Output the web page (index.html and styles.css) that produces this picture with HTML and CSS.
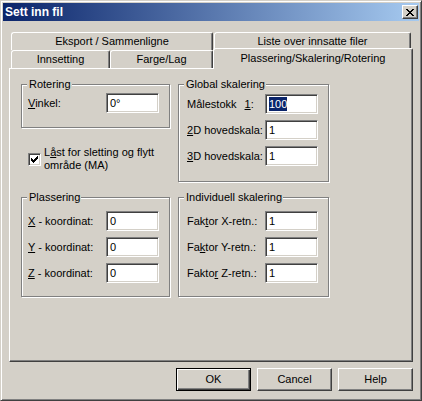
FILE: index.html
```html
<!DOCTYPE html>
<html>
<head>
<meta charset="utf-8">
<link rel="stylesheet" href="styles.css">
</head>
<body>
<div class="window">
  <div class="titlebar">
    <span class="title">Sett inn fil</span>
    <div class="close">
      <svg width="8" height="7" viewBox="0 0 8 7" shape-rendering="crispEdges"><path fill="#000" d="M0 0h2v1H0zM6 0h2v1H6zM1 1h2v1H1zM5 1h2v1H5zM2 2h4v1H2zM3 3h2v1H3zM2 4h4v1H2zM1 5h2v1H1zM5 5h2v1H5zM0 6h2v1H0zM6 6h2v1H6z"/></svg>
    </div>
  </div>
  <div class="content">
    <div class="tabs">
      <div class="tabrow">
        <div class="tab t-eksport">Eksport / Sammenligne</div>
        <div class="tab t-liste">Liste over innsatte filer</div>
      </div>
      <div class="tabrow row2">
        <div class="tab t-inns">Innsetting</div>
        <div class="tab t-farge">Farge/Lag</div>
        <div class="tab t-active">Plassering/Skalering/Rotering</div>
      </div>
    </div>
    <div class="panel">
      <div class="grid">
        <div class="cell">
          <div class="group g-left g-rot">
            <div class="gtitle">Rotering</div>
            <div class="fields">
              <div class="field"><span class="label"><u>V</u>inkel:</span><div class="input">0°</div></div>
            </div>
          </div>
          <div class="check">
            <div class="checkbox">
              <svg width="7" height="7" viewBox="0 0 7 7" shape-rendering="crispEdges"><path fill="#000" d="M6 0h1v1H6zM5 1h2v1H5zM0 2h1v1H0zM4 2h3v1H4zM0 3h2v1H0zM3 3h3v1H3zM0 4h5v1H0zM1 5h3v1H1zM2 6h1v1H2z"/></svg>
            </div>
            <div class="checklabel">L<u>å</u>st for sletting og flytt<br>område (MA)</div>
          </div>
        </div>
        <div class="group g-right g-global">
          <div class="gtitle">Global skalering</div>
          <div class="fields">
            <div class="field"><span class="label">Målestokk<span class="one"><u>1</u>:</span></span><div class="input"><span class="sel">100</span></div></div>
            <div class="field"><span class="label"><u>2</u>D hovedskala:</span><div class="input">1</div></div>
            <div class="field"><span class="label"><u>3</u>D hovedskala:</span><div class="input">1</div></div>
          </div>
        </div>
        <div class="group g-left g-box">
          <div class="gtitle">Plassering</div>
          <div class="fields">
            <div class="field"><span class="label"><u>X</u> - koordinat:</span><div class="input">0</div></div>
            <div class="field"><span class="label"><u>Y</u> - koordinat:</span><div class="input">0</div></div>
            <div class="field"><span class="label"><u>Z</u> - koordinat:</span><div class="input">0</div></div>
          </div>
        </div>
        <div class="group g-right g-box">
          <div class="gtitle">Individuell skalering</div>
          <div class="fields">
            <div class="field"><span class="label">Fak<u>t</u>or X-retn.:</span><div class="input">1</div></div>
            <div class="field"><span class="label">Fa<u>k</u>tor Y-retn.:</span><div class="input">1</div></div>
            <div class="field"><span class="label">Fakto<u>r</u> Z-retn.:</span><div class="input">1</div></div>
          </div>
        </div>
      </div>
    </div>
    <div class="buttons">
      <div class="btn default">OK</div>
      <div class="btn">Cancel</div>
      <div class="btn">Help</div>
    </div>
  </div>
</div>
</body>
</html>
```

FILE: styles.css
```css
html, body {
  margin: 0;
  padding: 0;
  background: #d4d0c8;
}
body {
  font-family: "Liberation Sans", Arial, sans-serif;
  font-size: 11px;
  color: #000;
}
.window {
  box-sizing: border-box;
  width: 422px;
  height: 401px;
  border: 1px solid;
  border-color: #d4d0c8 #404040 #404040 #d4d0c8;
  box-shadow: inset 1px 1px 0 #fff, inset -1px -1px 0 #808080;
  padding: 2px;
  background: #d4d0c8;
}
.titlebar {
  height: 18px;
  display: flex;
  align-items: center;
  justify-content: space-between;
  padding: 0 1px 0 2px;
  background: linear-gradient(to right, #0a246a, #a6caf0);
}
.title {
  color: #fff;
  font-weight: bold;
  font-size: 12px;
  line-height: 18px;
}
.close {
  box-sizing: border-box;
  width: 16px;
  height: 14px;
  border: 1px solid;
  border-color: #fff #404040 #404040 #fff;
  box-shadow: inset -1px -1px 0 #808080;
  background: #d4d0c8;
  display: flex;
  align-items: center;
  justify-content: center;
}
.close svg { display: block; margin-left: -1px; }
.content {
  padding-top: 11px;
}
.tabs {
  margin-left: 6px;
}
.tabrow {
  display: flex;
  height: 18px;
  padding-left: 2px;
}
.row2 {
  align-items: flex-end;
}
.tab {
  box-sizing: border-box;
  height: 18px;
  border-top: 1px solid #fff;
  border-left: 1px solid #fff;
  border-right: 1px solid #404040;
  box-shadow: inset -1px 0 0 #808080;
  border-radius: 3px 2px 0 0;
  text-align: center;
  line-height: 17px;
  white-space: nowrap;
  background: #d4d0c8;
}
.t-eksport { width: 202px; margin-right: 1px; }
.t-liste { width: 197px; }
.t-inns { width: 99px; }
.t-farge { width: 103px; }
.t-active {
  width: 200px;
  height: 21px;
  line-height: 18px;
  margin-bottom: -1px;
  position: relative;
  z-index: 1;
}
.panel {
  box-sizing: border-box;
  width: 404px;
  height: 294px;
  margin-left: 6px;
  border: 1px solid;
  border-color: #fff #404040 #404040 #fff;
  box-shadow: inset -1px -1px 0 #808080;
  padding: 15px 0 0 11px;
}
.grid {
  display: grid;
  grid-template-columns: 149px 151px;
  grid-template-rows: 113px 100px;
  column-gap: 8px;
  align-items: start;
}
.group {
  box-sizing: border-box;
  border: 1px solid #808080;
  box-shadow: 1px 1px 0 #fff, inset 1px 1px 0 #fff;
}
.g-left { padding: 0 10px 0 6px; }
.g-right { padding: 0 10px 0 8px; }
.gtitle {
  height: 13px;
  line-height: 13px;
  width: fit-content;
  padding: 0 1px 0 2px;
  margin: -7px 0 -6px;
  background: #d4d0c8;
  white-space: nowrap;
}
.g-left .gtitle { margin-left: -1px; }
.g-right .gtitle { margin-left: -3px; }
.g-rot { height: 44px; }
.g-rot .fields { padding-top: 8px; }
.g-global { height: 98px; }
.g-global .fields { padding-top: 9px; }
.g-box { height: 100px; }
.g-box .fields { padding-top: 13px; }
.fields {
  display: flex;
  flex-direction: column;
  gap: 6px;
}
.field {
  display: flex;
  align-items: center;
  height: 20px;
}
.label {
  flex: 1;
  white-space: nowrap;
}
.one { margin-left: 8px; }
.input {
  box-sizing: border-box;
  width: 53px;
  height: 20px;
  border: 1px solid;
  border-color: #808080 #fff #fff #808080;
  box-shadow: inset 1px 1px 0 #404040, inset -1px -1px 0 #d4d0c8;
  background: #fff;
  padding: 1px 2px 0 3px;
  line-height: 16px;
  white-space: nowrap;
  overflow: hidden;
}
.sel {
  background: #0a246a;
  color: #fff;
  display: inline-block;
  line-height: 14px;
}
.check {
  display: flex;
  align-items: center;
  gap: 3px;
  margin: 18px 0 0 7px;
}
.checkbox {
  box-sizing: border-box;
  width: 13px;
  height: 13px;
  flex: none;
  border: 1px solid;
  border-color: #808080 #fff #fff #808080;
  box-shadow: inset 1px 1px 0 #404040, inset -1px -1px 0 #d4d0c8;
  background: #fff;
  display: flex;
  align-items: center;
  justify-content: center;
}
.checkbox svg { display: block; }
.checklabel {
  line-height: 13px;
  white-space: nowrap;
}
.buttons {
  display: flex;
  justify-content: flex-end;
  gap: 6px;
  margin: 6px 6px 0 0;
}
.btn {
  box-sizing: border-box;
  width: 75px;
  height: 23px;
  border: 1px solid;
  border-color: #fff #404040 #404040 #fff;
  box-shadow: inset -1px -1px 0 #808080;
  text-align: center;
  line-height: 21px;
}
.btn.default {
  border-color: #000;
  box-shadow: inset 1px 1px 0 #fff, inset -1px -1px 0 #404040, inset -2px -2px 0 #808080;
}
```
